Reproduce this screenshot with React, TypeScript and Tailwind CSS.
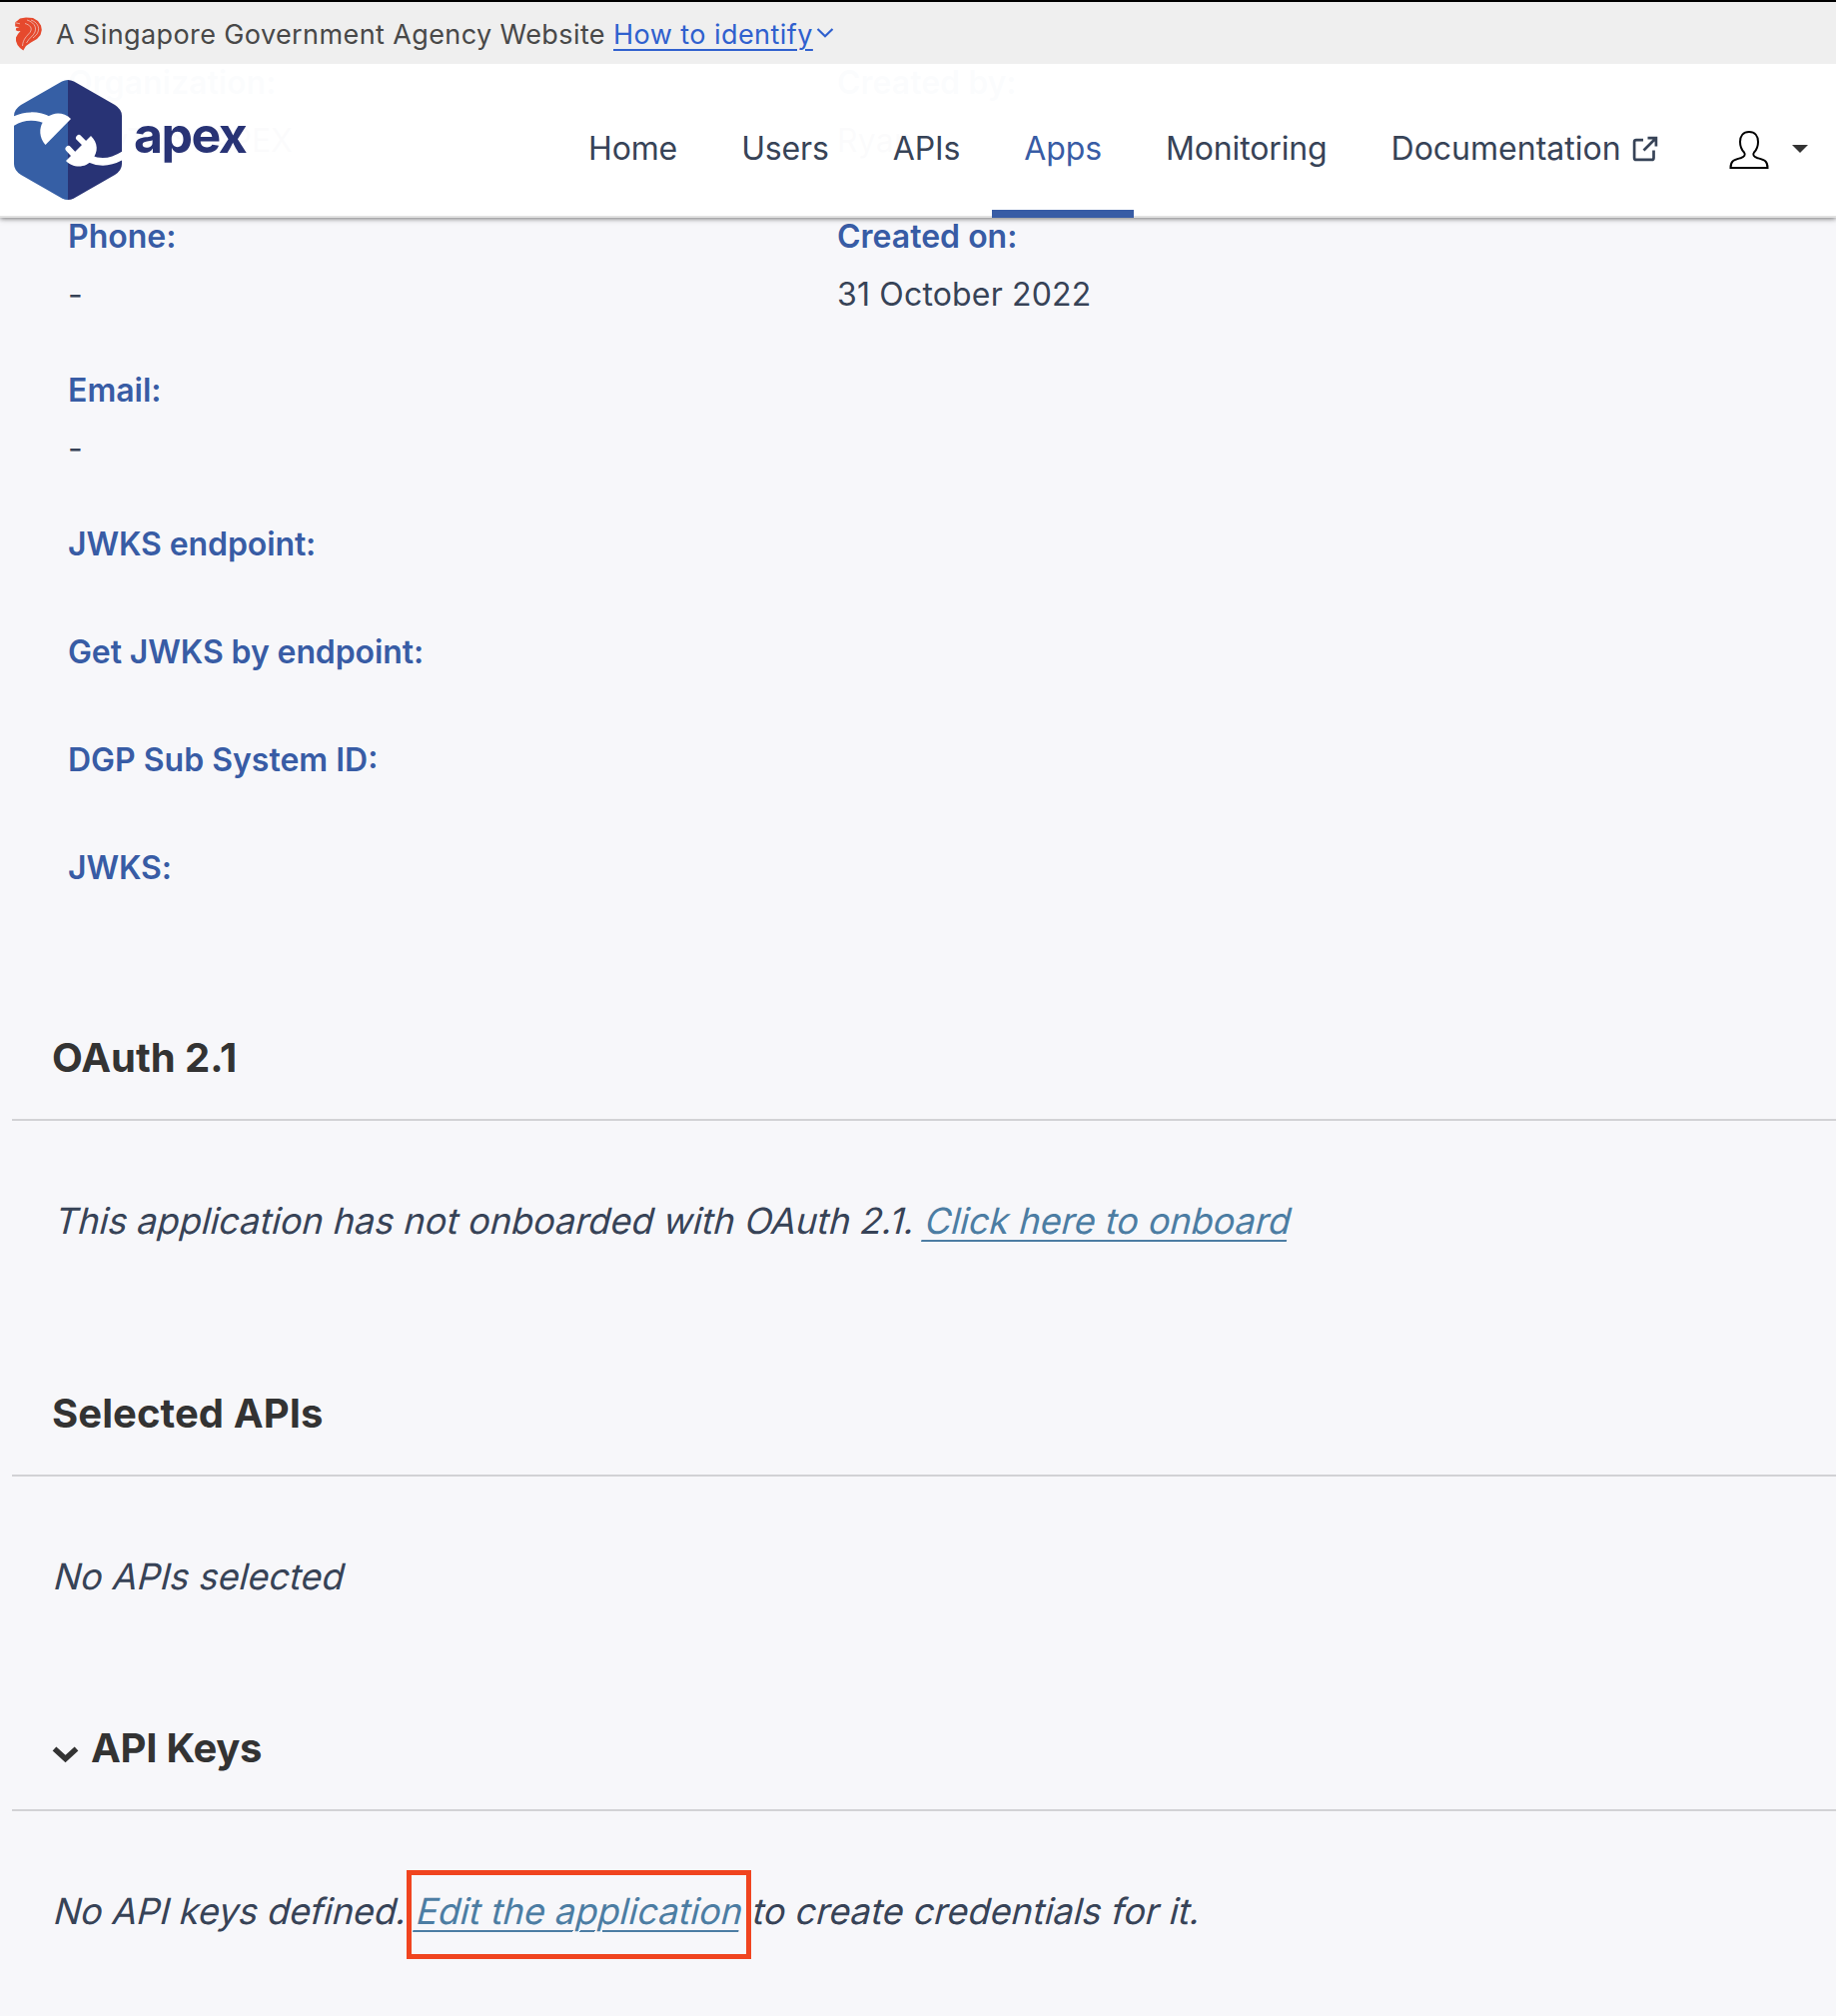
import React from "react";

const LABELS = "text-[32px] font-semibold leading-[52px] text-[#385ca5]";

function Lion() {
  return (
    <svg className="ml-[14px] mt-[1px] h-[34px] w-[28px] shrink-0" viewBox="0 0 28 34" fill="none">
      <path
        fill="#e6492d"
        d="M3 4 L6 1.5 L12 0.4 L19 1 L24 4 L27 8.5 L27.8 13 L26.5 18 L23 22 L17 25.5 L12 29 L9.3 33.5 L6 31 L3.5 28 L2 24 L2 20.5 L4 17 L6.5 14 L4 14.3 L1.8 13.3 L2.2 11 L5.5 10.3 L1.2 9.5 L1.2 5.3 Z"
      />
      <path
        stroke="#efefef"
        strokeWidth="0.6"
        d="M13 3 C19 5 23 9 21 15 C19.500 19 15 21 12.500 26 M11 6.500 C16 8 19 11 16 15.500 C13 19 9 22 8.500 29 M17 3 C23 5 26 10 24 15 C23 18 21 19 19 21 M1.500 5.800 L6 6.800"
      />
    </svg>
  );
}

function ApexMark() {
  return (
    <svg className="h-[120px] w-[108px]" viewBox="0 0 108 120">
      <defs>
        <clipPath id="hex">
          <path d="M48 1.500 Q54 -1.500 60 1.500 L101 25 Q108 29.500 108 36 V84 Q108 90.500 101 95 L60 118.500 Q54 121.500 48 118.500 L7 95 Q0 90.500 0 84 V36 Q0 29.500 7 25 Z" />
        </clipPath>
      </defs>
      <g clipPath="url(#hex)">
        <rect width="54" height="120" fill="#365fa5" />
        <rect x="54" width="54" height="120" fill="#283375" />
        <path d="M-2 42 C10 35 24 35 35 41" stroke="#fff" strokeWidth="8.500" fill="none" />
        <path d="M34 37 C40 32 50 32 57 39 L31.500 65 C25 58 25 48 29 42 Z" fill="#fff" />
        <path d="M76 79 C87 84 99 82 110 75" stroke="#fff" strokeWidth="7.500" fill="none" />
        <path d="M77 56 C84 63 85 72 78 80 C72 89 58 88 52 81 Z" fill="#fff" />
        <path d="M65 58 L72 65 M54.500 69 L61 76" stroke="#fff" strokeWidth="6" strokeLinecap="round" />
      </g>
    </svg>
  );
}

function ExternalIcon() {
  return (
    <svg className="ml-[11px] h-[26px] w-[26px]" viewBox="0 0 26 26" fill="none" stroke="#374357" strokeWidth="2.700">
      <path d="M11 4.100 H4 Q2.100 4.100 2.100 6 V21.900 Q2.100 23.900 4 23.900 H19.500 Q21.500 23.900 21.500 21.900 V14.500" />
      <path d="M15.500 2.100 H23.900 V10.500 M23.500 2.500 L11.500 14.500" />
    </svg>
  );
}

const NAV = ["Home", "Users", "APIs", "Apps", "Monitoring"];

function Header() {
  return (
    <header className="absolute inset-x-0 top-0 z-10">
      <div className="relative z-10 flex h-[64px] items-center border-t-2 border-black bg-[#efefef] text-[27px] leading-[40px] tracking-[0.400px] text-[#484848]">
        <Lion />
        <span className="ml-[14px] mt-[3px]">A Singapore Government Agency Website</span>
        <span className="ml-[8px] mt-[3px] tracking-[0.450px] text-[#2f60ce] underline decoration-2 underline-offset-[5px]">How to identify</span>
        <svg className="ml-[3px] h-[10px] w-[18px]" viewBox="0 0 18 10" fill="none" stroke="#2f60ce" strokeWidth="2.200">
          <path d="M1.500 1 L9 8.200 L16.500 1" />
        </svg>
      </div>
      <div className="flex h-[154px] border-b-2 border-[#e2e2e2] bg-white/98 shadow-[0_1px_5px_rgba(0,0,0,0.55)]">
        <div className="ml-[14px] mt-[16px] flex w-[543px]">
          <ApexMark />
          <span className="ml-[12px] mt-[25px] text-[50px] font-bold leading-[60px] tracking-[-1.500px] text-[#283375]">apex</span>
        </div>
        <nav className="flex text-[32px] leading-[40px] tracking-[-0.130px] text-[#374357]">
          {NAV.map((n) => (
            <a key={n} className={n === "Apps" ? "-mb-[2px] border-b-8 border-[#385ca5] px-[32px] pt-[65px] text-[#385ca5]" : "px-[32px] pt-[65px]"}>
              {n}
            </a>
          ))}
          <a className="flex items-start px-[32px] pt-[65px] tracking-normal">
            Documentation
            <span className="pt-[7px]"><ExternalIcon /></span>
          </a>
        </nav>
        <svg className="ml-[39px] mt-[66px] h-[40px] w-[40px]" viewBox="0 0 40 40" fill="none" stroke="#000" strokeWidth="2">
          <path d="M20 2 C14 2 11 6.500 11 12 C11 17.500 12.500 20 15 22.500 C17 25 15 27 12 28 C5 30 1.500 30.500 1.500 38 H38.500 C38.500 30.500 35 30 28 28 C25 27 23 25 25 22.500 C27.500 20 29 17.500 29 12 C29 6.500 26 2 20 2 Z" />
        </svg>
        <svg className="ml-[23px] mt-[81px] h-[8px] w-[16px]" viewBox="0 0 16 8">
          <path d="M0 0 H16 L8 8 Z" fill="#333" />
        </svg>
      </div>
    </header>
  );
}

function Field({ label, value }: { label: string; value?: string }) {
  return (
    <div className={value ? "h-[154px]" : "h-[108px]"}>
      <div className={LABELS + (label.includes("JWKS") ? " tracking-[-0.100px]" : "")}>{label}</div>
      {value && (
        <div
          className={
            "mt-[6px] text-[32px] leading-[52px] text-[#374357]" +
            (label === "Organization:" ? " tracking-[-0.100px]" : " tracking-[0.170px]")
          }
        >
          {value}
        </div>
      )}
    </div>
  );
}

function Title({ children }: { children: React.ReactNode }) {
  return (
    <h2 className="ml-[12px] flex h-[98px] border-b-2 border-[#d2d2d5] pl-[40px] text-[40px] font-bold leading-[70px] text-[#333]">
      {children}
    </h2>
  );
}

const NOTE = "flex pt-[77px] text-[36px] leading-[46px] whitespace-pre text-[#374357]";
const SLANT = "block origin-[0_36px] -skew-x-[14deg]";
const LINK = "block origin-[0_36px] -skew-x-[14deg] text-[#4c7da3] underline decoration-2 underline-offset-[6px]";

export default function App() {
  return (
    <div className="relative h-[2018px] w-[1838px] overflow-hidden bg-[#f7f7fa] font-['Inter',sans-serif]">
      <Header />
      <main className="pt-[57px]">
        <div className="grid h-[967px] grid-cols-[770px_1fr] pl-[68px]">
          <div>
            <Field label="Organization:" value="GovTech APEX" />
            <Field label="Phone:" value="-" />
            <Field label="Email:" value="-" />
            <Field label="JWKS endpoint:" />
            <Field label="Get JWKS by endpoint:" />
            <Field label="DGP Sub System ID:" />
            <Field label="JWKS:" />
          </div>
          <div>
            <Field label="Created by:" value="Ryan" />
            <Field label="Created on:" value="31 October 2022" />
          </div>
        </div>
        <section className="h-[356px]">
          <Title>OAuth 2.1</Title>
          <p className={NOTE + " pl-[53px]"}>
            <span className={SLANT}>{"This application has not onboarded with OAuth 2.1. "}</span>
            <a className={LINK}>Click here to onboard</a>
          </p>
        </section>
        <section className="h-[335px]">
          <Title>
            <span className="tracking-[0.080px]">Selected APIs</span>
          </Title>
          <p className={NOTE + " pl-[52px]"}>
            <span className={SLANT}>No APIs selected</span>
          </p>
        </section>
        <section>
          <Title>
            <svg className="mr-[12px] mt-[33px] h-[17px] w-[27px]" viewBox="0 0 27 17" fill="none" stroke="#333" strokeWidth="5.500">
              <path d="M2.500 2.500 L13.500 12.500 L24.500 2.500" strokeLinejoin="miter" />
            </svg>
            <span className="tracking-[-0.250px]">API Keys</span>
          </Title>
          <p className={NOTE + " pl-[52px]"}>
            <span className={SLANT + " tracking-[-0.090px]"}>{"No API keys defined. "}</span>
            <span className="relative">
              <a className={LINK + " tracking-[0.070px]"}>Edit the application</a>
              <span className="absolute -left-[8px] -top-[18px] h-[89px] w-[345px] border-[5px] border-[#f0441f]" />
            </span>
            <span className={SLANT + " tracking-[0.070px]"}>{" to create credentials for it."}</span>
          </p>
        </section>
      </main>
    </div>
  );
}
